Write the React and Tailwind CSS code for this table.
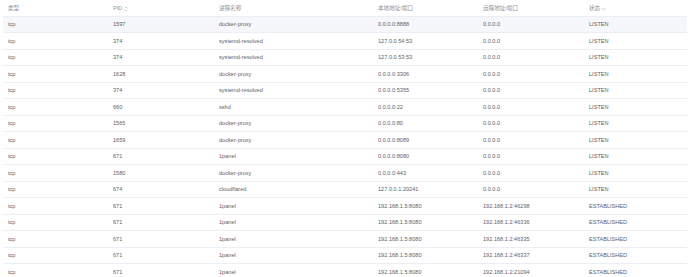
import React from 'react';

const rows = [
  ['tcp', '1597', 'docker-proxy', '0.0.0.0:8888', '0.0.0.0', 'LISTEN'],
  ['tcp', '374', 'systemd-resolved', '127.0.0.54:53', '0.0.0.0', 'LISTEN'],
  ['tcp', '374', 'systemd-resolved', '127.0.0.53:53', '0.0.0.0', 'LISTEN'],
  ['tcp', '1628', 'docker-proxy', '0.0.0.0:3306', '0.0.0.0', 'LISTEN'],
  ['tcp', '374', 'systemd-resolved', '0.0.0.0:5355', '0.0.0.0', 'LISTEN'],
  ['tcp', '660', 'sshd', '0.0.0.0:22', '0.0.0.0', 'LISTEN'],
  ['tcp', '1565', 'docker-proxy', '0.0.0.0:80', '0.0.0.0', 'LISTEN'],
  ['tcp', '1659', 'docker-proxy', '0.0.0.0:8089', '0.0.0.0', 'LISTEN'],
  ['tcp', '671', '1panel', '0.0.0.0:8080', '0.0.0.0', 'LISTEN'],
  ['tcp', '1580', 'docker-proxy', '0.0.0.0:443', '0.0.0.0', 'LISTEN'],
  ['tcp', '674', 'cloudflared', '127.0.0.1:20241', '0.0.0.0', 'LISTEN'],
  ['tcp', '671', '1panel', '192.168.1.5:8080', '192.168.1.2:46298', 'ESTABLISHED'],
  ['tcp', '671', '1panel', '192.168.1.5:8080', '192.168.1.2:46336', 'ESTABLISHED'],
  ['tcp', '671', '1panel', '192.168.1.5:8080', '192.168.1.2:46335', 'ESTABLISHED'],
  ['tcp', '671', '1panel', '192.168.1.5:8080', '192.168.1.2:46337', 'ESTABLISHED'],
  ['tcp', '671', '1panel', '192.168.1.5:8080', '192.168.1.2:21094', 'ESTABLISHED'],
];

// shared row layout: six fixed columns, fixed row height
const grid = 'grid grid-cols-[105px_106px_159px_105px_106px_1fr] h-[16.5px] pt-[2px] items-center border-b border-[#ebeef5]';

const SortIcon = () => (
  <svg width="4" height="6" viewBox="0 0 4 6" className="ml-[2px] inline-block">
    <path d="M0.5 2.4 L2 0.9 L3.5 2.4" fill="none" stroke="#a8abb2" strokeWidth="0.6" />
    <path d="M0.5 3.6 L2 5.1 L3.5 3.6" fill="none" stroke="#a8abb2" strokeWidth="0.6" />
  </svg>
);

const ChevronDown = () => (
  <svg width="5" height="4" viewBox="0 0 5 4" className="ml-[1px] inline-block">
    <path d="M0.6 1 L2.5 3 L4.4 1" fill="none" stroke="#a8abb2" strokeWidth="0.6" />
  </svg>
);

const App = () => {
  return (
    <div
      className="w-[690px] h-[277px] overflow-hidden bg-white px-[3px] text-[5.6px] leading-none antialiased"
      style={{ fontFamily: '"Liberation Sans", "Noto Sans CJK SC", sans-serif' }}
    >
      <div className={`${grid} text-[#909399]`}>
        <div className="pl-[5px]">类型</div>
        <div className="pl-[5px] flex items-center">PID<SortIcon /></div>
        <div className="pl-[5px]">进程名称</div>
        <div className="pl-[5px]">本地地址/端口</div>
        <div className="pl-[5px]">远程地址/端口</div>
        <div className="pl-[5px] flex items-center">状态<ChevronDown /></div>
      </div>
      {rows.map((r, i) => (
        <div key={i} className={`${grid} text-[#606266] ${i === 0 ? 'bg-[#f5f7fa]' : ''}`}>
          {r.map((c, j) => (
            <div key={j} className="pl-[5px] whitespace-nowrap">{c}</div>
          ))}
        </div>
      ))}
    </div>
  );
};

export default App;
